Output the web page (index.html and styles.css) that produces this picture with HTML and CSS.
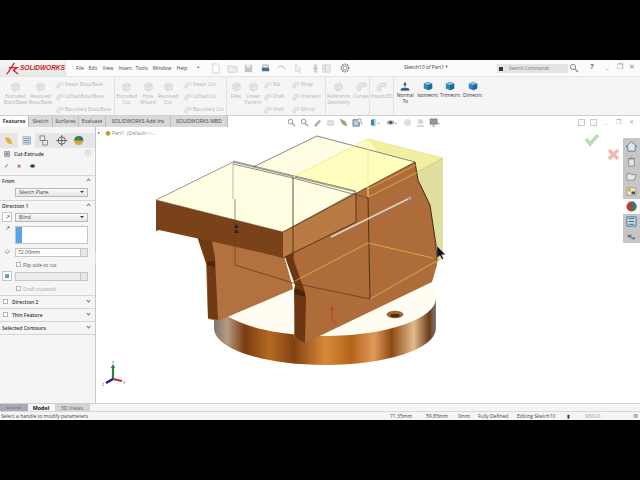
FILE: index.html
```html
<!DOCTYPE html>
<html lang="en">
<head>
<meta charset="utf-8">
<title>SOLIDWORKS</title>
<link rel="stylesheet" href="styles.css">
</head>
<body>
<svg class="defs" width="0" height="0">
  <symbol id="big" viewBox="0 0 12 12"><path d="M2 4l5-2 3 2v5l-5 2-3-2z" fill="#e8e8e8" stroke="#d0d0d0" stroke-width=".8"/><path d="M2 4l3 2 5-2M5 6v5" fill="none" stroke="#d0d0d0" stroke-width=".7"/></symbol>
  <symbol id="small" viewBox="0 0 10 10"><path d="M1 8c0-4 2-6 4-6h4v3H6c-1 0-2 1-2 4z" fill="#e6e6e6" stroke="#d0d0d0" stroke-width=".7"/></symbol>
  <symbol id="cube" viewBox="0 0 12 12"><path d="M6 1l5 2v6l-5 2-5-2V3z" fill="#2f86b4"/><path d="M6 1l5 2-5 2-5-2z" fill="#78c0de"/><path d="M6 5v6l5-2V3z" fill="#1f6a95"/></symbol>
  <symbol id="mini" viewBox="0 0 10 10"><circle cx="4" cy="4" r="2.6" fill="none" stroke="#7d8a96" stroke-width="1"/><path d="M6 6l3 3" stroke="#7d8a96" stroke-width="1.2"/></symbol>
</svg>
<div class="app">
  <header class="topbar">
    <div class="logo"><svg class="logo-mark" viewBox="0 0 14 14"><path d="M1 13L9 1M3 6h9l-4 3 5 4" fill="none" stroke="#d2232a" stroke-width="1.400"/></svg><span class="logo-text">SOLIDWORKS</span></div>
    <nav class="menu"><span>File</span><span>Edit</span><span>View</span><span>Insert</span><span>Tools</span><span>Window</span><span>Help</span><span class="pin">&#9650;</span></nav>
    <div class="quick">
      <svg class="qi" viewBox="0 0 12 12"><path d="M3 1h5l2 2v8H3z" fill="#fff" stroke="#d0d0d0"/></svg>
      <svg class="qi" viewBox="0 0 12 12"><path d="M1 3h4l1 1h5v6H1z" fill="#eee" stroke="#d0d0d0"/></svg>
      <svg class="qi" viewBox="0 0 12 12"><path d="M2 2h8v8H2z" fill="#c4c4c4"/><path d="M4 2h4v3H4z" fill="#eee"/></svg>
      <svg class="qi" viewBox="0 0 12 12"><path d="M2 5h8v4H2z" fill="#44708f"/><path d="M3 2h6v3H3z" fill="#ddd" stroke="#8a8a8a" stroke-width=".5"/></svg>
      <svg class="qi" viewBox="0 0 12 12"><path d="M2 5c3-3 6-2 8 2" fill="none" stroke="#c4c4c4" stroke-width="1.3"/></svg>
      <svg class="qi" viewBox="0 0 12 12"><path d="M3 1v9l2-2 2 3 1-1-2-2.500h3z" fill="#f4f4f4" stroke="#c8c8c8" stroke-width=".7"/></svg>
      <svg class="qi" viewBox="0 0 12 12"><rect x="4" y="1" width="4" height="10" rx="2" fill="#d4d4d4"/><path d="M4 6h4" stroke="#aaa"/></svg>
      <svg class="qi qi-opt" viewBox="0 0 12 12"><path d="M2 2h8v8H2zM5 2v8M2 6h3" fill="#eee" stroke="#c8c8c8" stroke-width=".8"/></svg>
      <svg class="qi qi-gear" viewBox="0 0 12 12"><circle cx="6" cy="6" r="3.600" fill="none" stroke="#8c8c8c" stroke-width="1.800" stroke-dasharray="1.500 .8"/><circle cx="6" cy="6" r="1.800" fill="none" stroke="#8c8c8c" stroke-width=".7"/></svg>
    </div>
    <div class="doc-title">Sketch10 of Part1 *</div>
    <div class="search"><span class="search-box"></span><span>Search Commands</span></div>
    <svg class="search-glass" viewBox="0 0 10 10"><use href="#mini"/></svg>
    <div class="win"><b>?</b><span class="win-gap"></span><span>_</span><span>&#10064;</span><span>&#10005;</span></div>
  </header>

  <section class="ribbon">
    <div class="group g1">
      <div class="tool"><svg><use href="#big"/></svg><span>Extruded<br>Boss/Base</span></div>
      <div class="tool"><svg><use href="#big"/></svg><span>Revolved<br>Boss/Base</span></div>
      <div class="stack"><div><svg><use href="#small"/></svg>Swept Boss/Base</div><div><svg><use href="#small"/></svg>Lofted Boss/Base</div><div><svg><use href="#small"/></svg>Boundary Boss/Base</div></div>
    </div>
    <div class="group g2">
      <div class="tool"><svg><use href="#big"/></svg><span>Extruded<br>Cut</span></div>
      <div class="tool tool-n"><svg><use href="#big"/></svg><span>Hole<br>Wizard</span></div>
      <div class="tool tool-n"><svg><use href="#big"/></svg><span>Revolved<br>Cut</span></div>
      <div class="stack st-c"><div><svg><use href="#small"/></svg>Swept Cut</div><div><svg><use href="#small"/></svg>Lofted Cut</div><div><svg><use href="#small"/></svg>Boundary Cut</div></div>
    </div>
    <div class="group g3">
      <div class="tool tool-f"><svg><use href="#big"/></svg><span>Fillet</span></div>
      <div class="tool tool-l"><svg><use href="#big"/></svg><span>Linear<br>Pattern</span></div>
      <div class="stack st-a"><div><svg><use href="#small"/></svg>Rib</div><div><svg><use href="#small"/></svg>Draft</div><div><svg><use href="#small"/></svg>Shell</div></div>
      <div class="stack"><div><svg><use href="#small"/></svg>Wrap</div><div><svg><use href="#small"/></svg>Intersect</div><div><svg><use href="#small"/></svg>Mirror</div></div>
    </div>
    <div class="group g4">
      <div class="tool tool-r"><svg><use href="#big"/></svg><span>Reference<br>Geometry</span></div>
      <div class="tool tool-n"><svg><use href="#small"/></svg><span>Curves</span></div>
    </div>
    <div class="group g5"><div class="tool tool-i"><svg><use href="#small"/></svg><span>Instant3D</span></div></div>
    <div class="views">
      <div class="view"><svg viewBox="0 0 12 12"><path d="M6 1v8M2 9h8l1 2H1z" fill="#2b5e86" stroke="#1e4d73" stroke-width=".8"/><circle cx="6" cy="4" r="1.600" fill="#2b5e86"/></svg><span>Normal<br>To</span></div>
      <div class="view"><svg><use href="#cube"/></svg><span>Isometric</span></div>
      <div class="view"><svg><use href="#cube"/></svg><span>Trimetric</span></div>
      <div class="view"><svg><use href="#cube"/></svg><span>Dimetric</span></div>
    </div>
  </section>

  <div class="tabbar">
    <span class="tab tab-on t1">Features</span><span class="tab t2">Sketch</span><span class="tab t3">Surfaces</span><span class="tab t4">Evaluate</span><span class="tab t5">SOLIDWORKS Add-Ins</span><span class="tab t6">SOLIDWORKS MBD</span>
    <div class="headsup">
      <svg viewBox="0 0 10 10"><use href="#mini"/></svg><svg viewBox="0 0 10 10"><use href="#mini"/></svg><svg viewBox="0 0 10 10"><path d="M1 8l6-6 2 2-6 6z" fill="#9fb3c1"/></svg><svg viewBox="0 0 10 10"><path d="M2 3h6v5H2z" fill="#e5e5e5" stroke="#ccc"/></svg><svg viewBox="0 0 10 10"><path d="M1 1l6 3 2 5-5-2z" fill="#7ea3bd" stroke="#d7a52c" stroke-width=".7"/></svg><svg class="hu-w" viewBox="0 0 12 10"><path d="M1 2h7v7H1z" fill="#b8d0e2" stroke="#55748c"/><circle cx="8" cy="3" r="2.200" fill="#e6f0f6" stroke="#55748c" stroke-width=".6"/><path d="M10 5l2 1-2 1z" fill="#888"/></svg><svg class="hu-w" viewBox="0 0 12 10"><path d="M2 2l4-1v8l-4-1z" fill="#3d86ad"/><path d="M6 1h2v8H6z" fill="#c5dbe7"/><path d="M10 5l2 1-2 1z" fill="#888"/></svg><svg class="hu-w" viewBox="0 0 12 10"><ellipse cx="5" cy="5" rx="4" ry="2.500" fill="#aaa"/><circle cx="5" cy="5" r="1.400" fill="#333"/><path d="M10 5l2 1-2 1z" fill="#888"/></svg><svg viewBox="0 0 10 10"><circle cx="5" cy="5" r="4" fill="#dedede"/></svg><svg viewBox="0 0 10 10"><circle cx="5" cy="4" r="3" fill="#d6d6d6"/><path d="M1 9h8" stroke="#ccc" stroke-width="1.500"/></svg><svg class="hu-w" viewBox="0 0 12 10"><path d="M1 1h8v6H1z" fill="#8f9aa3" stroke="#666" stroke-width=".6"/><path d="M4 9h2" stroke="#555"/><path d="M10 5l2 1-2 1z" fill="#888"/></svg>
    </div>
  </div>

  <main class="workspace">
    <aside class="panel">
      <div class="panel-tabs">
        <svg viewBox="0 0 12 12"><path d="M2 3c3-2 6 0 8 6-3 2-7 0-8-6z" fill="#e3b241"/></svg>
        <svg class="pt-on" viewBox="0 0 12 12"><path d="M2 2h8v8H2z" fill="#dfe9ef" stroke="#6e8a9c" stroke-width=".7"/><path d="M3 4h6M3 6h6M3 8h6" stroke="#48718c" stroke-width=".7"/></svg>
        <svg viewBox="0 0 12 12"><path d="M2 1h5v5H2zM5 6h5v5H5z" fill="#eee" stroke="#666" stroke-width=".8"/></svg>
        <svg viewBox="0 0 12 12"><circle cx="6" cy="6" r="4" fill="none" stroke="#444" stroke-width=".8"/><path d="M6 0v12M0 6h12" stroke="#444" stroke-width=".8"/></svg>
        <svg viewBox="0 0 12 12"><circle cx="6" cy="6" r="5" fill="#d9a82d"/><path d="M6 1a5 5 0 0 1 5 5H6z" fill="#1e6db2"/><path d="M1 6a5 5 0 0 1 5-5v5z" fill="#2e8c3c"/></svg>
      </div>
      <div class="pm-head"><svg viewBox="0 0 10 10"><path d="M1 1h8v8H1z" fill="#ccc" stroke="#666"/><path d="M3 3h4v4H3z" fill="#888"/></svg><strong>Cut-Extrude</strong><span class="help">&#9432;</span></div>
      <div class="pm-acts"><span class="ok">&#10003;</span><span class="no">&#10005;</span><svg viewBox="0 0 10 6"><ellipse cx="5" cy="3" rx="4" ry="2.500" fill="#555"/><circle cx="5" cy="3" r="1.200" fill="#111"/></svg></div>
      <div class="sec sec-from">
        <div class="sec-h"><b>From</b><i class="up"></i></div>
        <div class="row ind"><div class="select">Sketch Plane<em></em></div></div>
      </div>
      <div class="sec sec-dir">
        <div class="sec-h"><b>Direction 1</b><i class="up"></i></div>
        <div class="row first"><span class="icbtn">&#8599;</span><div class="select">Blind<em></em></div></div>
        <div class="row rowlist"><span class="icplain">&#8599;</span><div class="listbox"><span></span></div></div>
        <div class="row"><span class="icplain">&#9671;</span><div class="spin">72.00mm<u></u></div></div>
        <label class="check"><s></s>Flip side to cut</label>
        <div class="row"><span class="icbtn icblue"></span><div class="spin spin-off"><u></u></div></div>
        <label class="check off"><s></s>Draft outward</label>
      </div>
      <div class="sec sec-c"><div class="sec-h"><s></s><b>Direction 2</b><i class="down"></i></div></div>
      <div class="sec sec-c"><div class="sec-h"><s></s><b>Thin Feature</b><i class="down"></i></div></div>
      <div class="sec sec-c"><div class="sec-h"><b>Selected Contours</b><i class="down"></i></div></div>
      <span class="grip"></span>
    </aside>

    <div class="viewport">
      <div class="tree-root"><span class="tree-arrow"></span><svg viewBox="0 0 8 8"><path d="M1 3l3-2 3 2v3L4 8 1 6z" fill="#c99a2e"/></svg>Part1 &nbsp;(Default&lt;&lt;...</div>
      <svg class="model" viewBox="95 127 545 276" aria-label="Cut-extrude preview of a vise-like part">
        <defs>
          <linearGradient id="rim" x1="0" x2="1" y1="0" y2="0">
            <stop offset="0" stop-color="#7d7670"/><stop offset=".06" stop-color="#b59a80"/><stop offset=".14" stop-color="#7a3c0e"/><stop offset=".25" stop-color="#b56a24"/><stop offset=".36" stop-color="#83410f"/><stop offset=".5" stop-color="#d78a3a"/><stop offset=".62" stop-color="#b4641a"/><stop offset=".72" stop-color="#e09a5a"/><stop offset=".8" stop-color="#8d4a14"/><stop offset=".9" stop-color="#e5b98e"/><stop offset=".97" stop-color="#6b3c18"/><stop offset="1" stop-color="#7a7a7a"/>
          </linearGradient>
        </defs>
        <path d="M214 298v30c0 21 50 37 111 37s111-16 111-37v-30z" fill="url(#rim)"/>
        <ellipse cx="325" cy="298" rx="111" ry="38" fill="#fffdf2"/>
        <ellipse cx="395" cy="314.500" rx="8" ry="3.300" fill="#a86a2a" stroke="#5c3410" stroke-width=".6"/>
        <ellipse cx="395" cy="315.500" rx="4.800" ry="1.800" fill="#4a2a0c"/>
        <path d="M368 139l75 19v100l-6 4-1-17-6-40-12-25-3-18-22 12z" fill="#e0df9f"/>
        <path d="M253 167l64-31 98 26-59 30z" fill="#fffee3"/>
        <path d="M293 177l75-38 75 19-28 14-60 20-30-8z" fill="#fffea0" opacity=".55"/>
        <path d="M197 236l87 20 8 28 1 5-75 32-10-2-2-55z" fill="#b2713e"/>
        <path d="M197 236h14l4 22 3 62-10-2-1-53z" fill="#6f3a13"/>
        <path d="M207 262l8-1v6l-8-2z" fill="#4d2608"/>
        <path d="M283 232l132-70 3 18 12 25 6 40 1 20-5 17-127 61-11-5 1-49 1-5-9-30-4-12z" fill="#ad6c39"/>
        <path d="M284 254l11 31-1 6 1 47 10 5 1-46-2-8-9-25-3-12z" fill="#6c3712"/>
        <path d="M295 288l10 4v5l-10-3z" fill="#4a2409"/>
        <path d="M156 200l77-38 123 30-73 40z" fill="#fffee2" stroke="#555" stroke-width=".6"/>
        <path d="M156 200l127 32v26l-20-5-40-9-64-14-3 1z" fill="#7a4218"/>
        <path d="M283 232l72-39 1 29-73 36z" fill="#b97a44"/>
        <path d="M253 167l64-31 98 26" fill="none" stroke="#555" stroke-width=".7"/>
        <path d="M283 232l132-70" fill="none" stroke="#4a2a10" stroke-width=".7"/>
        <path d="M415 162l3 18 12 25 6 40 1 17" fill="none" stroke="#2d1a08" stroke-width=".9"/>
        <path d="M283 258l73-36 0-29" fill="none" stroke="#3a1f08" stroke-width=".7"/>
        <path d="M233 161l123 30M233 164l60 14 75 20" fill="none" stroke="#444" stroke-width=".6"/>
        <path d="M233 162v37" stroke="#9c9c90" stroke-width=".7"/>
        <path d="M235 199v66" stroke="#5a3a1e" stroke-width=".6"/>
        <path d="M293 177v56" stroke="#3a2a18" stroke-width=".8"/>
        <path d="M293 233v24" stroke="#2a1a08" stroke-width=".7"/>
        <path d="M235 265l58 18 77 16" fill="none" stroke="#5c3515" stroke-width=".7"/>
        <path d="M368 139v58" stroke="#f1ee86" stroke-width=".9"/>
        <path d="M368 197l2 102" stroke="#3b2410" stroke-width=".8"/>
        <path d="M293 177l75-38 75 19" fill="none" stroke="#efe98a" stroke-width=".8"/>
        <path d="M368 189l48-24M368 197l50-25M443 158l-25 14M295 281l73-38 65 15M370 299l70-40" fill="none" stroke="#ebc44c" stroke-width=".7"/>
        <path d="M331 237l79-39" stroke="#d8d4cc" stroke-width="1.800"/>
        <circle cx="410" cy="198" r="2" fill="#a3a3a0" stroke="#77736d" stroke-width=".5"/>
        <path d="M236 224l3 4h-5zM236 229l3 4h-5z" fill="#222"/>
        <path d="M332 309v12l5 2M332 307l-1.500 3h3z" fill="none" stroke="#d8302a" stroke-width=".9"/>
        <path d="M437 246v12l3-2.500 2 4 1.500-.8-2-4h4z" fill="#111" stroke="#fff" stroke-width=".3"/>
        <g class="triad">
          <path d="M113 379v-12" stroke="#2e7d3a" stroke-width="2.200"/><path d="M113 364l2.200 4h-4.400z" fill="#2e7d3a"/>
          <path d="M113 379l-7 4" stroke="#1a1a9a" stroke-width="2.200"/>
          <path d="M113 379l9 2" stroke="#b0322e" stroke-width="2"/>
        </g>
        <text x="112" y="364" class="ax">Y</text><text x="102" y="386" class="ax">Z</text><text x="123" y="384" class="ax ax-x">X</text>
        <path d="M586 139l4 5 8-9" fill="none" stroke="#b9dcb4" stroke-width="3.600"/>
        <path d="M609 150l9 9M618 150l-9 9" stroke="#f2b9b4" stroke-width="3.600"/>
      </svg>
      <div class="vp-win"><span><i class="vb"></i></span><span><i class="vb"></i></span><span>_</span><span>&#10064;</span><span>&#10005;</span></div>
      <div class="taskpane">
        <svg viewBox="0 0 12 12"><path d="M6 1l6 5h-2v5H2V6H0z" fill="#dfe8ee" stroke="#4d6472" stroke-width=".8"/></svg>
        <svg viewBox="0 0 12 12"><path d="M3 3h6v8H3zM2 3h8M5 1h2" fill="#e6e6e6" stroke="#777" stroke-width=".8"/></svg>
        <svg viewBox="0 0 12 12"><path d="M1 3h4l1 1h5l-2 6H1z" fill="#e8e8e8" stroke="#777" stroke-width=".8"/></svg>
        <svg viewBox="0 0 12 12"><path d="M1 2h10v8H1z" fill="#efe6c6" stroke="#777" stroke-width=".6"/><path d="M6 6h4v3H6z" fill="#355"/><path d="M2 3h3v3H2z" fill="#d6a22c"/></svg>
        <svg class="tp-on" viewBox="0 0 12 12"><circle cx="6" cy="6" r="5.500" fill="#c63a28"/><path d="M6 .5a5.500 5.500 0 0 1 5.500 5.500H6z" fill="#2a6fb5"/><path d="M6 6h5.500A5.500 5.500 0 0 1 6 11.500z" fill="#2b8a3e"/></svg>
        <svg viewBox="0 0 12 12"><path d="M1 1h10v10H1z" fill="#cfe0ea" stroke="#47708c"/><path d="M3 3h6M3 6h6M3 9h6" stroke="#2c5d7e"/></svg>
        <svg viewBox="0 0 12 12"><path d="M2 4h4v3H2zM6 7h4v2H6z" fill="#5f7586"/></svg>
      </div>
    </div>
  </main>

  <div class="modeltabs">
    <span class="mnav">&#9666;&#9666; &#9666; &#9656; &#9656;&#9656;</span><span class="mt mt-on">Model</span><span class="mt">3D Views</span>
  </div>
  <footer class="status">
    <span class="st-msg">Select a handle to modify parameters</span>
    <span class="st-a1">71.35mm</span><span class="st-a2">59.85mm</span><span class="st-a3">0mm</span><span class="st-a4">Fully Defined</span><span class="st-a5">Editing Sketch10</span><span class="st-a6">&#9646;</span><span class="st-a7">MMGS</span><span class="st-a8">&#9881;</span>
  </footer>
</div>
</body>
</html>
```

FILE: styles.css
```css
* { box-sizing: border-box; }
html, body { margin: 0; height: 100%; background: #000; overflow: hidden; }
body { font-family: "Open Sans", "Noto Sans", sans-serif; font-size: 5.2px; color: #444; line-height: 1.2; }
.defs { position: absolute; }
.app { margin-top: 60px; height: 360px; display: flex; flex-direction: column; background: #fff; overflow: hidden; }

/* top bar */
.topbar { height: 17px; flex: none; background: #fbfbfb; display: flex; align-items: center; position: relative; border-bottom: 1px solid #e6e6e6; }
.logo { width: 66px; height: 16px; background: linear-gradient(#f7f7f7, #e8e8e8); display: flex; align-items: center; padding-left: 6px; border-right: 1px solid #e0e0e0; flex: none; }
.logo-mark { width: 13px; height: 13px; flex: none; }
.logo-text { font-family: "Liberation Sans", sans-serif; font-weight: 700; font-style: italic; font-size: 6.600px; color: #c6242b; letter-spacing: -.05px; margin-left: 1px; }
.menu { display: flex; margin-left: 10px; flex: none; width: 134px; font-size: 5px; color: #444; }
.menu span:nth-child(1) { width: 12.500px; }
.menu span:nth-child(2) { width: 14px; }
.menu span:nth-child(3) { width: 16px; }
.menu span:nth-child(4) { width: 17px; }
.menu span:nth-child(5) { width: 17px; }
.menu span:nth-child(6) { width: 24px; }
.menu span:nth-child(7) { width: 20px; }
.pin { font-size: 3.500px; color: #3a7d44; }
.quick { display: flex; gap: 5.600px; align-items: center; flex: none; width: 150px; }
.qi { width: 11px; height: 11px; flex: none; }
.qi-opt { margin-left: -5px; }
.qi-gear { margin-left: 1px; width: 12px; height: 12px; }
.doc-title { position: absolute; left: 404px; top: 5px; font-size: 4.900px; color: #333; white-space: nowrap; }
.search { position: absolute; left: 497px; top: 4px; width: 71px; height: 9px; background: #e4e4e4; display: flex; align-items: center; gap: 6px; padding-left: 2px; color: #777; font-size: 4.600px; }
.search-box { width: 4px; height: 4px; background: #333; flex: none; }
.search-glass { position: absolute; left: 569px; top: 3px; width: 10px; height: 10px; }
.win { position: absolute; left: 588px; top: 3px; display: flex; align-items: center; color: #8b8b8b; font-size: 6.500px; }
.win span { width: 12.500px; text-align: center; flex: none; }
.win b { color: #4d6472; font-size: 7px; width: 8px; text-align: center; }
.win .win-gap { width: 5px; }

/* ribbon */
.ribbon { height: 39px; flex: none; background: #f5f5f5; display: flex; border-bottom: 1px solid #cfcfcf; color: #b4b4b4; }
.group { display: flex; border-right: 1px solid #e2e2e2; flex: none; padding-top: 2px; }
.g1 { width: 115px; padding-left: 3px; }
.g2 { width: 112px; }
.g3 { width: 99px; }
.g4 { width: 44px; }
.g5 { width: 24px; }
.tool { width: 25px; flex: none; display: flex; flex-direction: column; align-items: center; text-align: center; font-size: 4.900px; }
.tool svg { width: 11px; height: 11px; margin: 2px 0 2px; flex: none; }
.tool-n { width: 20px; }
.tool-f { width: 18px; }
.tool-l { width: 16px; }
.tool-r { width: 25px; }
.tool-i { width: 23px; }
.g2 .tool:first-child { width: 23px; }
.stack { display: flex; flex-direction: column; gap: 3px; margin-left: 3px; white-space: nowrap; font-size: 4.800px; padding-top: 1px; }
.stack div { display: flex; align-items: center; height: 9.500px; gap: 1px; }
.stack svg { width: 8px; height: 8px; flex: none; }
.st-a { width: 25px; }
.st-c { margin-left: 6px; }
.views { display: flex; color: #333; flex: none; padding-top: 2px; }
.view { width: 22.500px; flex: none; display: flex; flex-direction: column; align-items: center; text-align: center; font-size: 4.900px; }
.view svg { width: 10px; height: 10px; margin: 2px 0 2px; flex: none; }

/* tabs */
.tabbar { height: 11px; flex: none; display: flex; background: #fff; position: relative; z-index: 2; }
.tab { background: #d9d9d9; border-right: 1px solid #bcbcbc; font-size: 5.200px; color: #444; text-align: center; line-height: 10px; white-space: nowrap; flex: none; }
.tab-on { background: #fff; font-weight: 700; color: #333; }
.t1 { width: 29px; }
.t2 { width: 24px; }
.t3 { width: 26px; }
.t4 { width: 27px; }
.t5 { width: 65px; }
.t6 { width: 57px; }
.headsup { position: absolute; left: 287px; top: 2px; display: flex; align-items: center; gap: 4px; }
.headsup svg { width: 9px; height: 9px; flex: none; }
.headsup .hu-w { width: 11px; height: 9px; margin-right: 2px; }

/* workspace */
.workspace { flex: 1; display: flex; min-height: 0; }
.panel { width: 96px; flex: none; background: #f5f5f5; border-right: 1px solid #c8c8c8; position: relative; }
.panel-tabs { height: 21px; padding-top: 6px; display: flex; background: linear-gradient(#f5f5f5 6px, #e6e6e6 6px); }
.panel-tabs svg { width: 17.500px; height: 15px; padding: 2px 2px; flex: none; }
.panel-tabs .pt-on { background: #f5f5f5; }
.pm-head { height: 12px; display: flex; align-items: center; padding: 0 4px; gap: 4px; font-size: 5.200px; color: #333; }
.pm-head svg { width: 6px; height: 6px; flex: none; }
.pm-head strong { font-weight: 600; flex: 1; }
.help { color: #777; font-size: 6px; }
.pm-acts { height: 16px; display: flex; align-items: flex-start; gap: 8px; padding: 3px 0 0 4px; border-bottom: 1px solid #d5d5d5; }
.ok { color: #6f9b28; font-size: 5.500px; font-weight: 700; }
.no { color: #b5302c; font-size: 5px; font-weight: 700; }
.pm-acts svg { width: 7px; height: 4px; margin-top: 1px; }
.sec { border-bottom: 1px solid #d5d5d5; padding: 0 2px; }
.sec-h { display: flex; align-items: center; height: 9px; font-size: 5px; color: #333; }
.sec-h b { font-weight: 600; flex: 1; }
.sec-h s { width: 5px; height: 5px; background: #fff; border: 1px solid #b5b5b5; margin-right: 4px; flex: none; margin-left: 1px; }
.sec-h i { width: 3px; height: 3px; border-left: 1px solid #777; border-top: 1px solid #777; margin-right: 3px; flex: none; }
.sec-h .up { transform: rotate(45deg); }
.sec-h .down { transform: rotate(225deg); margin-top: -2px; }
.sec-from { height: 25px; }
.sec-dir { height: 95px; }
.sec-c { height: 13px; padding-top: 1px; }
.row { display: flex; align-items: center; height: 10px; margin-bottom: 3px; gap: 3px; }
.row.first { margin-top: 2px; }
.ind { padding-left: 13px; margin-top: 2px; }
.select { flex: 1; height: 9px; margin-right: 5px; background: linear-gradient(#fafafa, #e6e6e6); border: 1px solid #b8b8b8; font-size: 5px; line-height: 7px; padding-left: 3px; color: #444; position: relative; }
.select em { position: absolute; right: 3px; top: 2px; border: 2px solid transparent; border-top: 2.500px solid #333; border-bottom: 0; }
.icbtn { width: 10px; height: 10px; background: #fff; border: 1px solid #c5c5c5; flex: none; font-size: 6px; line-height: 8px; text-align: center; color: #222; }
.icblue { background: linear-gradient(135deg, #8fb2c9 30%, #2d668c); border-color: #c5c5c5; box-shadow: inset 0 0 0 2px #fff; }
.icplain { width: 10px; flex: none; text-align: center; font-size: 6px; color: #222; }
.rowlist { height: 19px; align-items: flex-start; }
.listbox { flex: 1; height: 18px; margin: 1px 5px 0 0; background: #fff; border: 1px solid #c5c5c5; }
.listbox span { display: block; width: 6px; height: 100%; background: #57a5e6; }
.spin { flex: 1; height: 9px; margin-right: 5px; background: #fff; border: 1px solid #c5c5c5; font-size: 5px; line-height: 7px; padding-left: 2px; position: relative; }
.spin u { position: absolute; right: 0; top: 0; bottom: 0; width: 7px; background: #e8e8e8; border-left: 1px solid #c5c5c5; }
.spin-off { background: #ececec; }
.check { display: flex; align-items: center; gap: 2px; height: 9px; margin: 0 0 2px 14px; font-size: 5px; color: #555; }
.check s { width: 5px; height: 5px; background: #fff; border: 1px solid #b5b5b5; flex: none; }
.check.off { color: #aaa; margin: 0 0 0 14px; }
.grip { position: absolute; right: -3px; top: 126px; width: 3px; height: 10px; background: #dfdfdf; }

/* viewport */
.viewport { flex: 1; position: relative; background: #fff; }
.model { position: absolute; left: -1px; top: 0; width: 545px; height: 276px; }
.ax { font-family: "Open Sans", sans-serif; font-size: 4px; fill: #555; }
.ax-x { fill: #b0322e; }
.tree-root { position: absolute; left: 2px; top: 3px; display: flex; align-items: center; gap: 1px; font-size: 5px; color: #888; white-space: nowrap; }
.tree-root svg { width: 6px; height: 6px; flex: none; }
.tree-arrow { width: 0; height: 0; border: 1.500px solid transparent; border-left: 2px solid #555; margin-right: 3px; }
.vp-win { position: absolute; left: 479px; top: -8px; z-index: 3; display: flex; align-items: center; color: #aaa; font-size: 6px; }
.vp-win span { width: 12.500px; text-align: center; flex: none; display: flex; justify-content: center; }
.vb { display: block; width: 7px; height: 7px; border: 1px solid #ccc; background: #fafafa; }
.taskpane { position: absolute; right: 0; top: 11px; width: 17px; height: 105px; background: #c6c6c6; display: flex; flex-direction: column; padding-top: 1px; }
.taskpane svg { width: 17px; height: 15px; padding: 2px 3px; flex: none; }
.taskpane .tp-on { background: #fff; }

/* bottom */
.modeltabs { height: 9px; flex: none; background: #f5f5f5; border-top: 1px solid #cfcfcf; display: flex; border-bottom: 1px solid #d8d8d8; }
.mnav { width: 27.500px; background: #a9a9b4; flex: none; font-size: 3.500px; line-height: 8px; color: #76767f; text-align: center; white-space: nowrap; overflow: hidden; }
.mt { width: 27px; flex: none; text-align: center; font-size: 5.400px; line-height: 8px; color: #666; background: #d4d4d4; }
.mt-on { background: #f7f7f7; color: #111; font-weight: 700; }
.mt + .mt { width: 35px; }
.status { height: 8px; flex: none; background: #f5f5f5; position: relative; font-size: 5px; line-height: 8px; color: #444; }
.status span { position: absolute; top: 0; white-space: nowrap; }
.st-msg { left: 1px; }
.st-a1 { left: 390px; }
.st-a2 { left: 426px; }
.st-a3 { left: 458px; }
.st-a4 { left: 478px; }
.st-a5 { left: 517px; }
.st-a6 { left: 567px; color: #333; }
.st-a7 { left: 585px; color: #aaa; }
.st-a8 { left: 633px; color: #777; font-size: 6px; }
```
